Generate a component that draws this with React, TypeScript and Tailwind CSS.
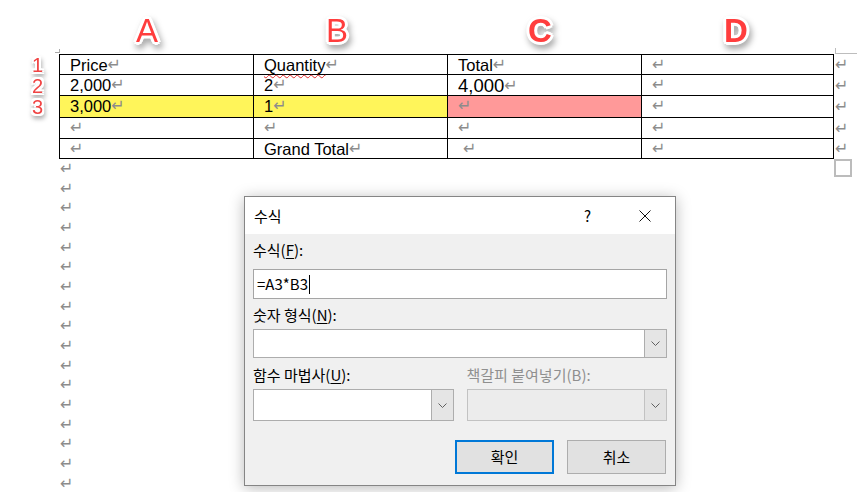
const outlineBig =
  "[text-shadow:3px_0_0_#fff,-3px_0_0_#fff,0_3px_0_#fff,0_-3px_0_#fff,2px_2px_0_#fff,-2px_-2px_0_#fff,2px_-2px_0_#fff,-2px_2px_0_#fff,0_0_4px_#fff] drop-shadow-[2px_4px_3px_rgba(0,0,0,0.35)]";
const outlineSmall =
  "[text-shadow:2px_0_0_#fff,-2px_0_0_#fff,0_2px_0_#fff,0_-2px_0_#fff,2px_2px_0_#fff,-2px_-2px_0_#fff,2px_-2px_0_#fff,-2px_2px_0_#fff] drop-shadow-[1px_3px_2px_rgba(0,0,0,0.3)]";

// Word paragraph mark
function Mark({ className = "" }: { className?: string }) {
  return (
    <span className={`font-['DejaVu_Sans',sans-serif] text-[16px] leading-none text-[#8c8c8c] ${className}`}>
      ↵
    </span>
  );
}

type Cell = { text?: string; big?: boolean; wavy?: boolean; bg?: string; indent?: boolean };

const rows: { h: string; num?: string; cells: Cell[] }[] = [
  { h: "h-[20px]", num: "1", cells: [{ text: "Price" }, { text: "Quantity", wavy: true }, { text: "Total" }, {}] },
  { h: "h-[21px]", num: "2", cells: [{ text: "2,000" }, { text: "2" }, { text: "4,000", big: true }, {}] },
  {
    h: "h-[22px]",
    num: "3",
    cells: [
      { text: "3,000", bg: "bg-[#fff55a]" },
      { text: "1", bg: "bg-[#fff55a]" },
      { bg: "bg-[#ff9999]" },
      {},
    ],
  },
  { h: "h-[21px]", cells: [{}, {}, {}, {}] },
  { h: "h-[20px]", cells: [{}, { text: "Grand Total" }, { indent: true }, {}] },
];

const widths = ["w-[194px]", "w-[194px]", "w-[194px]", "w-[192px]"];

function Chevron() {
  return (
    <svg width="9" height="5" viewBox="0 0 9 5" fill="none">
      <polyline points="0.5,0.5 4.5,4.5 8.5,0.5" stroke="#606060" strokeWidth="1" />
    </svg>
  );
}

function Dialog() {
  return (
    <div className="absolute left-[244px] top-[196px] w-[432px] h-[290px] border border-[#858585] bg-[#f0f0f0] shadow-[0_2px_14px_rgba(0,0,0,0.28)] font-['Noto_Sans_CJK_KR',sans-serif] text-[15px] text-black">
      {/* title bar */}
      <div className="h-[37px] bg-white flex items-center pl-[9px]">
        <span className="flex-1 leading-[20px]">수식</span>
        <span className="leading-[20px]">?</span>
        <svg className="ml-[48px] mr-[24px]" width="12" height="12" viewBox="0 0 12 12">
          <line x1="0.5" y1="0.5" x2="11.5" y2="11.5" stroke="#111" strokeWidth="1" />
          <line x1="11.5" y1="0.5" x2="0.5" y2="11.5" stroke="#111" strokeWidth="1" />
        </svg>
      </div>

      <div className="px-[8px] pt-[6px] flex flex-col">
        <div className="leading-[20px]">
          수식(<span className="underline underline-offset-[2px]">F</span>):
        </div>
        <div className="mt-[9px] h-[30px] border border-[#a5a5a5] bg-white flex items-center pl-[3px] leading-[20px]">
          =A3*B3
          <span className="inline-block w-[1px] h-[19px] bg-black ml-[1px]" />
        </div>

        <div className="mt-[6px] leading-[20px]">
          숫자 형식(<span className="underline underline-offset-[2px]">N</span>):
        </div>
        <div className="mt-[4px] h-[29px] border border-[#adadad] bg-white flex justify-end">
          <div className="w-[22px] h-full border-l border-[#adadad] bg-[#e5e5e5] flex items-center justify-center">
            <Chevron />
          </div>
        </div>

        <div className="mt-[7px] grid grid-cols-2 gap-x-[13px]">
          <div className="leading-[20px]">
            함수 마법사(<span className="underline underline-offset-[2px]">U</span>):
          </div>
          <div className="leading-[20px] text-[#8f8f8f]">책갈피 붙여넣기(B):</div>
          <div className="mt-[4px] h-[32px] border border-[#adadad] bg-white flex justify-end">
            <div className="w-[22px] h-full border-l border-[#adadad] bg-[#e5e5e5] flex items-center justify-center">
              <Chevron />
            </div>
          </div>
          <div className="mt-[4px] h-[32px] border border-[#c2c2c2] bg-[#ececec] flex justify-end">
            <div className="w-[22px] h-full border-l border-[#c2c2c2] bg-[#e3e3e3] flex items-center justify-center">
              <Chevron />
            </div>
          </div>
        </div>

        <div className="mt-[19px] flex justify-end gap-[13px] pr-[1px]">
          <div className="w-[99px] h-[34px] border-2 border-[#0078d7] bg-[#e1e1e1] flex items-center justify-center leading-[20px]">
            확인
          </div>
          <div className="w-[99px] h-[34px] border border-[#adadad] bg-[#e1e1e1] flex items-center justify-center leading-[20px]">
            취소
          </div>
        </div>
      </div>
    </div>
  );
}

export default function App() {
  return (
    <div className="relative w-[857px] h-[492px] overflow-hidden bg-white font-['Liberation_Sans',sans-serif] text-black">
      {/* text boundary corner marks */}
      <div className="absolute left-[55px] top-[49px] w-[5px] h-[4px] border-r border-b border-[#a8a8a8]" />
      <div className="absolute left-[835px] top-[48px] w-[22px] h-[6px] border-l border-b border-[#bdbdbd]" />

      {/* column letters */}
      <div className="h-[54px] pt-[14px] flex items-start text-[33px] leading-none text-[#ff3d3d]">
        <span className={`ml-[136px] ${outlineBig}`}>A</span>
        <span className={`ml-[168px] ${outlineBig}`}>B</span>
        <span className={`ml-[180px] font-bold ${outlineBig}`}>C</span>
        <span className={`ml-[172px] font-bold ${outlineBig}`}>D</span>
      </div>

      {/* table */}
      <div className="flex">
        <div className="w-[59px] pt-[1px] flex flex-col">
          {rows.map((r, i) => (
            <div key={i} className={`${r.h} flex items-center pl-[32px]`}>
              {r.num && (
                <span className={`text-[20px] leading-none text-[#f04444] ${outlineSmall}`}>{r.num}</span>
              )}
            </div>
          ))}
        </div>

        <div className="w-[775px] border-l border-t border-black flex flex-col">
          {rows.map((r, i) => (
            <div key={i} className={`${r.h} flex border-b border-black`}>
              {r.cells.map((c, j) => (
                <div
                  key={j}
                  className={`${widths[j]} h-full border-r border-black pl-[10px] pt-[1px] whitespace-nowrap ${
                    c.bg ?? ""
                  } ${c.big ? "text-[18.5px] leading-[19px]" : "text-[16.5px] leading-[19px]"}`}
                >
                  {c.text && (
                    <span
                      className={
                        c.wavy
                          ? "underline decoration-wavy decoration-[#e02a2a] decoration-1 underline-offset-[3px]"
                          : ""
                      }
                    >
                      {c.text}
                    </span>
                  )}
                  <Mark className={`align-[1px] ${c.indent ? "ml-[5px]" : ""}`} />
                </div>
              ))}
            </div>
          ))}
        </div>

        <div className="pt-[1px] pl-[1px] flex flex-col">
          {rows.map((r, i) => (
            <div key={i} className={`${r.h} flex items-center`}>
              <Mark />
            </div>
          ))}
        </div>
      </div>

      {/* paragraphs below table */}
      <div className="flex items-start">
        <div className="pl-[60px] flex flex-col">
          {Array.from({ length: 17 }).map((_, i) => (
            <div key={i} className="h-[19.7px] flex items-center">
              <Mark />
            </div>
          ))}
        </div>
        <div className="ml-auto mr-[5px] w-[18px] h-[18px] border-2 border-[#bcbcbc]" />
      </div>

      <Dialog />
    </div>
  );
}
